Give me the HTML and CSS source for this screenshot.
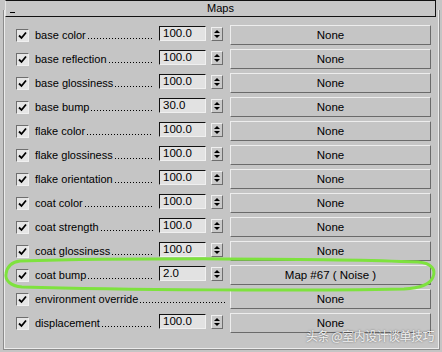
FILE: index.html
```
<!DOCTYPE html>
<html lang="en">
<head>
  <meta charset="UTF-8">
  <title>Maps</title>
  <link rel="stylesheet" href="styles.css">
</head>
<body>
<div class="rollout">
  <div class="title"><span class="collapse"></span><span class="title-text">Maps</span></div>
  <div id="rows" class="rows"></div>
</div>
<svg class="ring" width="442" height="352" viewBox="0 0 442 352">
  <path d="M20 261 C120 258 330 258 418 262 C432 263 436 270 433 277 C430 285 420 288 404 289 C300 291 120 290 22 287 C10 286 5 280 6 274 C7 266 12 262 20 261 Z"
        fill="none" stroke="#7ee23e" stroke-width="3"/>
</svg>
<div class="mark">头条 @室内设计谈单技巧</div>
<script>
  const rows = [
    ['base color', '100.0', 'None'],
    ['base reflection', '100.0', 'None'],
    ['base glossiness', '100.0', 'None'],
    ['base bump', '30.0', 'None'],
    ['flake color', '100.0', 'None'],
    ['flake glossiness', '100.0', 'None'],
    ['flake orientation', '100.0', 'None'],
    ['coat color', '100.0', 'None'],
    ['coat strength', '100.0', 'None'],
    ['coat glossiness', '100.0', 'None'],
    ['coat bump', '2.0', 'Map #67 ( Noise )'],
    ['environment override', null, 'None'],
    ['displacement', '100.0', 'None']
  ];
  const check = '<svg width="9" height="9" viewBox="0 0 9 9"><path d="M1 4.5 L3.5 7 L8 1.5" fill="none" stroke="#000" stroke-width="1.8"/></svg>';
  let sb = '';
  rows.forEach(([name, value, map]) => {
    sb += `<div class="row">`;
    sb += `<span class="chk">${check}</span>`;
    sb += `<span class="label${value === null ? ' wide' : ''}"><span>${name}</span><span class="dots"></span></span>`;
    if (value !== null) {
      sb += `<span class="num">${value}</span><span class="spin"><i class="up"></i><i class="down"></i></span>`;
    }
    sb += `<span class="btn">${map}</span></div>`;
  });
  document.querySelector('#rows').innerHTML = sb;
</script>
</body>
</html>
```

FILE: styles.css
```
html, body {
  margin: 0;
  width: 442px;
  height: 352px;
  overflow: hidden;
  background: #c5c5c5;
  font-family: "Liberation Sans", Arial, sans-serif;
  font-size: 11px;
  color: #000;
}

.rollout {
  margin: 10px 2px 0 3px;
  height: 339px;
  border: 1px solid #8c8c8c;
  border-top: none;
  box-shadow: inset 1px 0 0 #ececec, inset -1px -1px 0 #ececec;
}

.title {
  position: relative;
  top: -10px;
  margin: 0 3px 0 1px;
  height: 15px;
  border: 1px solid #111;
  border-left-color: #e4e4e4;
  background: #c7c7c7;
  display: flex;
  align-items: center;
  justify-content: center;
}
.collapse {
  position: absolute;
  left: 4px;
  top: 11px;
  width: 5px;
  height: 1px;
  background: #000;
}
.title-text {
  line-height: 15px;
}

.rows {
  margin-top: -2px;
  display: flex;
  flex-direction: column;
  gap: 4px;
}

.row {
  display: flex;
  align-items: center;
  height: 20px;
  padding-left: 12px;
}

.chk {
  width: 11px;
  height: 11px;
  border: 1px solid;
  border-color: #6e6e6e #f0f0f0 #f0f0f0 #6e6e6e;
  background: #e6e6e6;
  margin-right: 6px;
  display: flex;
  align-items: center;
  justify-content: center;
}

.label {
  width: 118px;
  margin-right: 6px;
  display: flex;
  align-items: baseline;
  white-space: nowrap;
}
.label.wide {
  width: 190px;
  margin-right: 5px;
}
.dots {
  flex: 1;
  height: 9px;
  margin-left: 2px;
  background-image: linear-gradient(to right, #000 1px, transparent 1px);
  background-size: 3px 1px;
  background-repeat: repeat-x;
  background-position: left bottom;
}

.num {
  align-self: flex-start;
  margin-top: 1px;
  box-sizing: border-box;
  width: 47px;
  height: 15px;
  padding: 0 3px;
  line-height: 13px;
  font-size: 11.5px;
  border: 1px solid;
  border-color: #111 #f0f0f0 #f0f0f0 #111;
  background: #e2e2e2;
  margin-right: 5px;
}

.spin {
  align-self: flex-start;
  margin-top: 2px;
  box-sizing: border-box;
  width: 12px;
  height: 14px;
  border: 1px solid;
  border-color: #f0f0f0 #6e6e6e #6e6e6e #f0f0f0;
  background: #c9c9c9;
  margin-right: 7px;
  display: flex;
  flex-direction: column;
  align-items: center;
  justify-content: center;
  gap: 2px;
}
.spin i {
  width: 0;
  height: 0;
  border-left: 3px solid transparent;
  border-right: 3px solid transparent;
}
.spin .up {
  border-bottom: 3px solid #000;
}
.spin .down {
  border-top: 3px solid #000;
}

.btn {
  box-sizing: border-box;
  width: 201px;
  height: 20px;
  border: 1px solid;
  border-color: #ededed #6a6a6a #6a6a6a #ededed;
  background: #c5c5c5;
  display: flex;
  align-items: center;
  justify-content: center;
  font-size: 11.5px;
}

.ring {
  position: absolute;
  left: 0;
  top: 0;
  pointer-events: none;
}

.mark {
  position: absolute;
  left: 306px;
  top: 327px;
  font-family: "Noto Sans CJK SC", sans-serif;
  font-size: 12px;
  letter-spacing: -0.5px;
  color: rgba(255, 255, 255, 0.9);
  text-shadow: 0 0 2px rgba(0, 0, 0, 0.55);
}
```
